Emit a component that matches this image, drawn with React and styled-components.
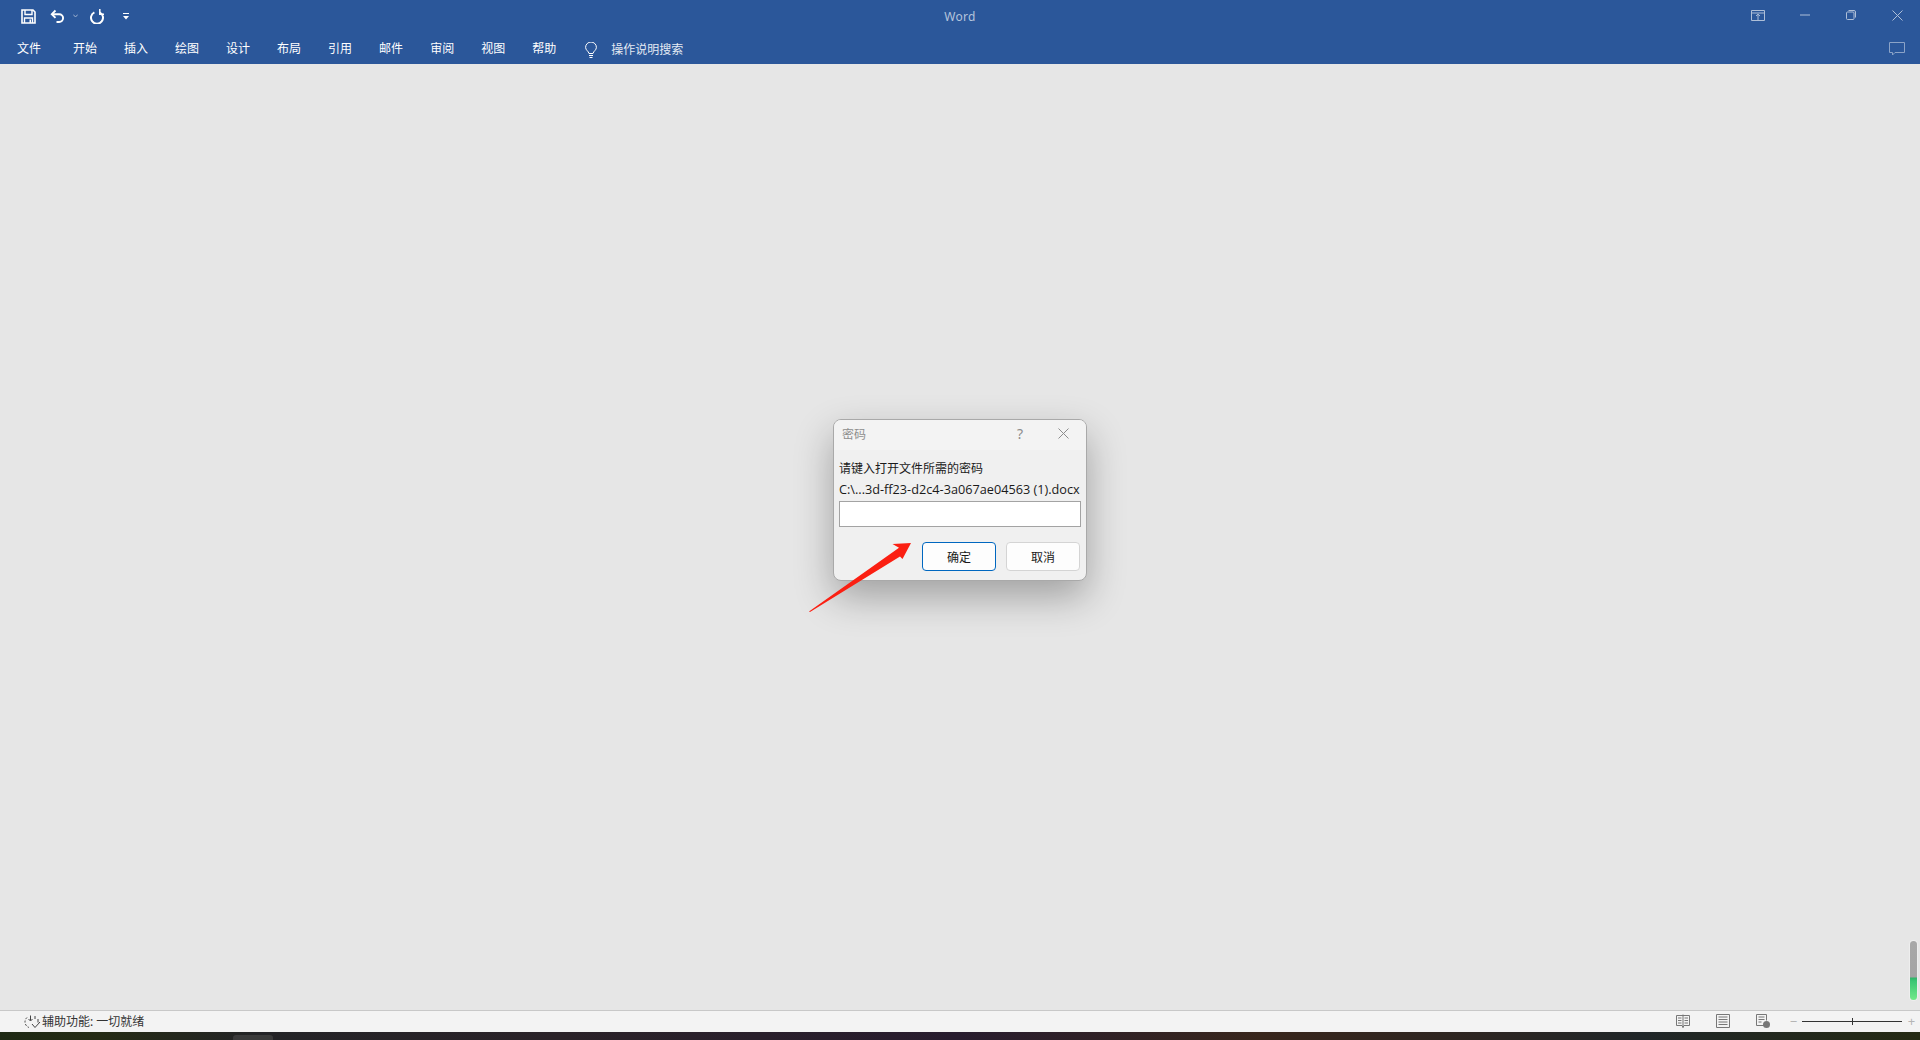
import React from "react";
import styled, { createGlobalStyle } from "styled-components";

const GlobalStyle = createGlobalStyle`
  html, body, #root {
    margin: 0;
    padding: 0;
    height: 100%;
  }
  body {
    font-family: "Noto Sans", "Noto Sans CJK SC", sans-serif;
    font-size: 12px;
    overflow: hidden;
    background: #e6e6e6;
  }
`;

const Page = styled.div`
  position: relative;
  display: flex;
  flex-direction: column;
  height: 1040px;
  width: 1920px;
`;

const Header = styled.header`
  background: #2b579a;
  color: #fff;
  height: 64px;
  flex-shrink: 0;
`;

const TitleBar = styled.div`
  display: grid;
  grid-template-columns: 1fr auto 1fr;
  align-items: center;
  height: 32px;
`;

const QuickAccess = styled.div`
  display: flex;
  align-items: center;
  padding-left: 21px;
`;

const QuickIcon = styled.svg`
  display: block;
  margin-right: ${({ $gap }) => $gap}px;
  flex-shrink: 0;
`;

const AppTitle = styled.div`
  font-size: 12px;
  color: #b4c4dc;
  letter-spacing: 0.3px;
`;

const WindowControls = styled.div`
  display: flex;
  align-items: center;
  justify-content: flex-end;
  padding: 0 17px 2px 0;
`;

const ControlIcon = styled.svg`
  display: block;
  margin-left: ${({ $gap }) => $gap}px;
  opacity: 0.62;
`;

const MenuBar = styled.nav`
  display: flex;
  align-items: center;
  box-sizing: border-box;
  height: 32px;
  padding: 2px 0 0 17px;
`;

const MenuItem = styled.span`
  margin-right: ${({ $gap }) => $gap || 27}px;
  line-height: 30px;
  white-space: nowrap;
`;

const Bulb = styled.svg`
  display: block;
  margin: 2px 14px 0 2px;
`;

const SearchHint = styled.span`
  color: #e4eaf3;
`;

const CommentIcon = styled.svg`
  display: block;
  margin-left: auto;
  margin-right: 15px;
  opacity: 0.45;
`;

const Workspace = styled.main`
  flex: 1;
  display: flex;
  justify-content: center;
  align-items: flex-start;
  padding-top: 355px;
  background: #e6e6e6;
`;

const Dialog = styled.section`
  width: 254px;
  height: 162px;
  box-sizing: border-box;
  background: #f0f0f0;
  border: 1px solid #a9a9a9;
  border-radius: 8px;
  box-shadow: 0 16px 38px rgba(0, 0, 0, 0.3);
  overflow: hidden;
  display: flex;
  flex-direction: column;
`;

const DialogTitle = styled.div`
  height: 30px;
  flex-shrink: 0;
  box-sizing: border-box;
  background: #f3f3f3;
  display: flex;
  align-items: center;
  padding: 0 17px 3px 8px;
  color: #8e8e8e;
`;

const DialogName = styled.span`
  flex: 1;
`;

const HelpMark = styled.span`
  font-size: 14px;
  color: #8c8c8c;
  margin-right: 35px;
`;

const DialogBody = styled.div`
  padding: 8px 5px 0 5px;
  color: #1a1a1a;
  display: flex;
  flex-direction: column;
`;

const Prompt = styled.div`
  height: 21px;
  line-height: 21px;
  white-space: nowrap;
`;

const FilePath = styled.div`
  height: 21px;
  line-height: 21px;
  white-space: nowrap;
  font-family: "Open Sans", sans-serif;
  font-size: 12.7px;
`;

const PasswordInput = styled.input`
  display: block;
  box-sizing: border-box;
  width: 242px;
  height: 26px;
  margin: 1px 0 0;
  padding: 0;
  background: #fff;
  border: 1px solid #a3a3a3;
  outline: none;
`;

const ButtonRow = styled.div`
  display: flex;
  justify-content: flex-end;
  gap: 10px;
  margin-top: 15px;
  padding-right: 1px;
`;

const DialogButton = styled.button`
  width: 74px;
  height: 29px;
  padding: 0;
  box-sizing: border-box;
  background: #fdfdfd;
  color: #1a1a1a;
  font-family: inherit;
  font-size: 12px;
  border-radius: 4px;
  border: 1px solid ${({ $primary }) => ($primary ? "#0067c0" : "#d4d4d4")};
`;

const Arrow = styled.svg`
  position: absolute;
  left: 800px;
  top: 530px;
`;

const VolumeMeter = styled.div`
  position: absolute;
  left: 1910px;
  top: 941px;
  width: 7px;
  height: 59px;
  border-radius: 4px;
  box-shadow: 0 0 0 1px #eeeeee;
  background: linear-gradient(
    to bottom,
    #a8a8a8 0,
    #a4a4a4 36px,
    #2fb468 37px,
    #3bc674 40px,
    #72e98a 59px
  );
`;

const StatusBar = styled.footer`
  height: 22px;
  flex-shrink: 0;
  box-sizing: border-box;
  border-top: 1px solid #c8c8c8;
  background: #f3f3f3;
  display: flex;
  align-items: center;
  padding: 0 0 1px 24px;
  color: #333;
`;

const StatusText = styled.span`
  margin-left: 1px;
  white-space: nowrap;
`;

const StatusRight = styled.div`
  margin-left: auto;
  display: flex;
  align-items: center;
  padding-right: 4px;
`;

const ViewIcon = styled.svg`
  display: block;
  margin-right: ${({ $gap }) => $gap}px;
`;

const ZoomButton = styled.span`
  color: #b5b5b5;
  font-size: 13px;
  line-height: 20px;
  width: 9px;
  text-align: center;
`;

const ZoomTrack = styled.div`
  position: relative;
  width: 100px;
  height: 1px;
  background: #333;
  margin: 0 5px 0 4px;
`;

const ZoomThumb = styled.div`
  position: absolute;
  left: 50px;
  top: -3px;
  width: 1px;
  height: 7px;
  background: #333;
`;

const Taskbar = styled.div`
  position: relative;
  height: 8px;
  flex-shrink: 0;
  background: linear-gradient(
    to right,
    #1e2914 0,
    #252b15 100px,
    #232326 260px,
    #2a2228 560px,
    #281c2e 960px,
    #38261c 1260px,
    #2d2622 1480px,
    #202628 1640px,
    #252a14 1920px
  );
`;

const TaskTab = styled.div`
  position: absolute;
  left: 233px;
  bottom: 0;
  width: 40px;
  height: 5px;
  background: #3a3a3a;
  border-radius: 3px 3px 0 0;
`;

const menus = [
  ["文件", 32],
  ["开始"],
  ["插入"],
  ["绘图"],
  ["设计"],
  ["布局"],
  ["引用"],
  ["邮件"],
  ["审阅"],
  ["视图"],
  ["帮助", 27],
];

export default function App() {
  return (
    <Page>
      <GlobalStyle />
      <Header>
        <TitleBar>
          <QuickAccess>
            <QuickIcon $gap={14} width="15" height="15" viewBox="0 0 15 15" fill="none">
              <path d="M1 1h11l2 2v11H1z" stroke="#fff" strokeWidth="1.6" />
              <path d="M4 1v4.5h7V1" stroke="#fff" strokeWidth="1.4" />
              <path d="M3.5 14V9h8v5" stroke="#fff" strokeWidth="1.4" />
              <path d="M8.5 10.5h1.5V14H8.5z" fill="#fff" />
            </QuickIcon>
            <QuickIcon $gap={8} width="15" height="15" viewBox="0 0 15 15" fill="none">
              <path d="M5.5 1.5 1.8 5.2l3.7 3.7" stroke="#fff" strokeWidth="1.9" />
              <path d="M2 5.2h7.2a3.7 3.7 0 0 1 0 7.8H6.5" stroke="#fff" strokeWidth="1.9" />
            </QuickIcon>
            <QuickIcon $gap={12} width="5" height="4" viewBox="0 0 5 4" fill="none">
              <path d="M.3.6 2.5 3 4.700.6" stroke="#9fb2d0" strokeWidth="1" />
            </QuickIcon>
            <QuickIcon $gap={19} width="14" height="15" viewBox="0 0 14 15" fill="none">
              <path d="M9.600 3.300a6 6 0 1 1-5.200 0" stroke="#fff" strokeWidth="2" />
              <path d="M9.800 0v5.200H14" stroke="#fff" strokeWidth="1.500" />
            </QuickIcon>
            <QuickIcon $gap={0} width="6" height="7" viewBox="0 0 6 7" fill="#fff">
              <path d="M0 0h6v1H0z" />
              <path d="M0 3h6L3 6.500z" />
            </QuickIcon>
          </QuickAccess>
          <AppTitle>Word</AppTitle>
          <WindowControls>
            <ControlIcon $gap={0} width="14" height="11" viewBox="0 0 14 11" fill="none" stroke="#fff">
              <path d="M.5.5h13v10H.5zM.5 3h13M7 10.500V4.500M5 6l2-1.800L9 6" />
            </ControlIcon>
            <ControlIcon $gap={35} width="10" height="2" viewBox="0 0 10 2" stroke="#fff">
              <path d="M0 1h10" />
            </ControlIcon>
            <ControlIcon $gap={36} width="10" height="10" viewBox="0 0 10 10" fill="none" stroke="#fff">
              <rect x=".5" y="2" width="7.500" height="7.500" rx="1" />
              <path d="M2.500.5H8A1.500 1.500 0 0 1 9.500 2v5.500" />
            </ControlIcon>
            <ControlIcon $gap={36} width="11" height="11" viewBox="0 0 11 11" stroke="#fff">
              <path d="M.5.5l10 10M10.500.5l-10 10" />
            </ControlIcon>
          </WindowControls>
        </TitleBar>
        <MenuBar>
          {menus.map(([label, gap]) => (
            <MenuItem key={label} $gap={gap}>
              {label}
            </MenuItem>
          ))}
          <Bulb width="12" height="16" viewBox="0 0 12 16" fill="none" stroke="#fff">
            <path d="M4 11.500C3.500 9 .6 8.200.6 5.400a5.400 5.400 0 0 1 10.800 0c0 2.800-2.900 3.600-3.400 6.100z" />
            <path d="M4 13.500h4M4.500 15.500h3" />
          </Bulb>
          <SearchHint>操作说明搜索</SearchHint>
          <CommentIcon width="16" height="14" viewBox="0 0 16 14" fill="none" stroke="#fff">
            <path d="M.5.500h15v10H6L3.500 13v-2.500h-3z" />
          </CommentIcon>
        </MenuBar>
      </Header>

      <Workspace>
        <Dialog>
          <DialogTitle>
            <DialogName>密码</DialogName>
            <HelpMark>?</HelpMark>
            <svg width="11" height="11" viewBox="0 0 11 11" stroke="#8c8c8c">
              <path d="M.5.5l10 10M10.500.5l-10 10" />
            </svg>
          </DialogTitle>
          <DialogBody>
            <Prompt>请键入打开文件所需的密码</Prompt>
            <FilePath>C:\...3d-ff23-d2c4-3a067ae04563 (1).docx</FilePath>
            <PasswordInput type="password" />
            <ButtonRow>
              <DialogButton $primary>确定</DialogButton>
              <DialogButton>取消</DialogButton>
            </ButtonRow>
          </DialogBody>
        </Dialog>
      </Workspace>

      <Arrow width="120" height="90" viewBox="800 530 120 90">
        <path d="M911 543 892.500 544 899 547.700 809 611.500 810 612 900 556.500 902.500 559z" fill="#fb1f12" />
      </Arrow>
      <VolumeMeter />

      <StatusBar>
        <svg width="17" height="15" viewBox="0 0 17 15" fill="none" stroke="#444">
          <path d="M3 3.500A6 6 0 0 0 1 8a6 6 0 0 0 4 5.500" strokeDasharray="2 1.500" />
          <path d="M6.500 1.500v5M4.500 5l2 2 2-2M11 2v3M14 5v3.500M8 10l3 3.500 5-5.500" />
        </svg>
        <StatusText>辅助功能: 一切就绪</StatusText>
        <StatusRight>
          <ViewIcon $gap={26} width="14" height="14" viewBox="0 0 14 14" fill="none" stroke="#777">
            <path d="M.5 1.500h13v10H8l-1 2-1-2H.5zM7 .5v13M2 4h3.500M2 6.500h3.500M2 9h3.500M8.500 4H12M8.500 6.500H12M8.500 9H12" />
          </ViewIcon>
          <ViewIcon $gap={26} width="14" height="14" viewBox="0 0 14 14" fill="none" stroke="#777">
            <path d="M.5.5h13v13H.5zM2.500 3h9M2.500 5.500h9M2.500 8h9M2.500 10.500h9" />
          </ViewIcon>
          <ViewIcon $gap={19} width="14" height="14" viewBox="0 0 14 14" fill="none" stroke="#777">
            <path d="M9 11.500H.5V.5h10v6M2.500 3h6M2.500 5.500h6M2.500 8h3" />
            <circle cx="10.500" cy="10.500" r="3.500" fill="#777" stroke="none" />
          </ViewIcon>
          <ZoomButton>−</ZoomButton>
          <ZoomTrack>
            <ZoomThumb />
          </ZoomTrack>
          <ZoomButton>+</ZoomButton>
        </StatusRight>
      </StatusBar>
      <Taskbar>
        <TaskTab />
      </Taskbar>
    </Page>
  );
}
